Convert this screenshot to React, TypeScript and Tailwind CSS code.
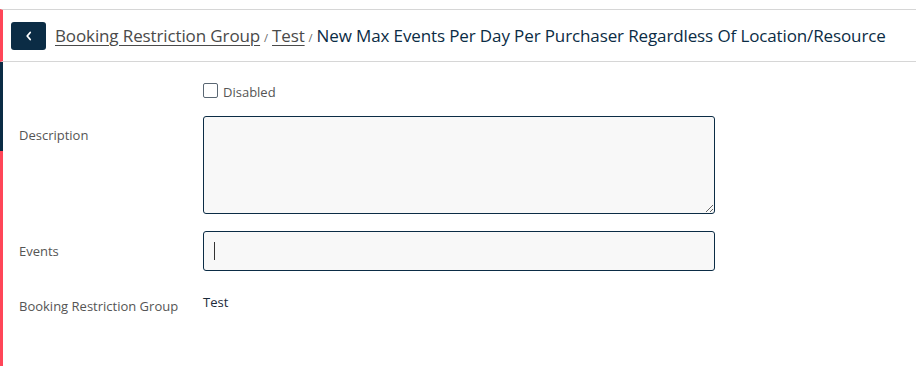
import React from "react";

const App = () => {
  return (
    <div className="h-[366px] w-[916px] overflow-hidden bg-white pt-[9px] font-['Open_Sans',sans-serif]">
      {/* header */}
      <div className="flex h-[53px] items-center gap-[9px] border-y border-l-[3px] border-y-[#d6d6d6] border-l-[#ff4658] pl-[8px]">
        <button className="flex h-[28px] w-[35px] items-center justify-center rounded-[3px] bg-[#0b2c45]">
          <svg width="10" height="12" viewBox="0 0 10 12" fill="none">
            <path d="M6.2 2.5 L3.2 6 L6.2 9.5" stroke="white" strokeWidth="1.8" strokeLinecap="round" strokeLinejoin="round" />
          </svg>
        </button>
        <div className="flex items-baseline text-[17px] tracking-[-0.12px]">
          <a className="text-[#4a4a4a] underline underline-offset-[3px]">Booking Restriction Group</a>
          <span className="mx-[4px] text-[11px] text-[#666]">/</span>
          <a className="text-[#4a4a4a] underline underline-offset-[3px]">Test</a>
          <span className="mx-[4px] text-[11px] text-[#666]">/</span>
          <span className="text-[#0b2c45]">New Max Events Per Day Per Purchaser Regardless Of Location/Resource</span>
        </div>
      </div>

      {/* body */}
      <div className="flex h-[304px]">
        <div className="flex w-[3px] flex-col">
          <div className="h-[89px] bg-[#0b2c45]" />
          <div className="flex-1 bg-[#ff4658]" />
        </div>
        <div className="grid grid-cols-[184px_512px] content-start pl-[16px] pt-[19px] text-[13px]">
          <div />
          <label className="flex items-start gap-[5px] text-[#555]">
            <span className="mt-[2px] h-[15px] w-[15px] rounded-[2px] border border-[#5a6773] bg-white" />
            <span className="pt-[2px]">Disabled</span>
          </label>

          <div className="pt-[23px] text-[#555]">Description</div>
          <textarea className="mt-[13px] h-[98px] resize-y rounded-[3px] border border-[#0b2c45] bg-[#f8f8f8]" />

          <div className="flex items-center pt-[20px] text-[#555]">Events</div>
          <div className="mt-[17px] flex h-[40px] items-center rounded-[3px] border border-[#0b2c45] bg-[#f8f8f8] pl-[10px]">
            <span className="h-[18px] w-px bg-[#333]" />
          </div>

          <div className="pt-[26px] text-[#555]">Booking Restriction Group</div>
          <div className="pt-[22px] text-[#1c2b3a]">Test</div>
        </div>
      </div>
    </div>
  );
};

export default App;
